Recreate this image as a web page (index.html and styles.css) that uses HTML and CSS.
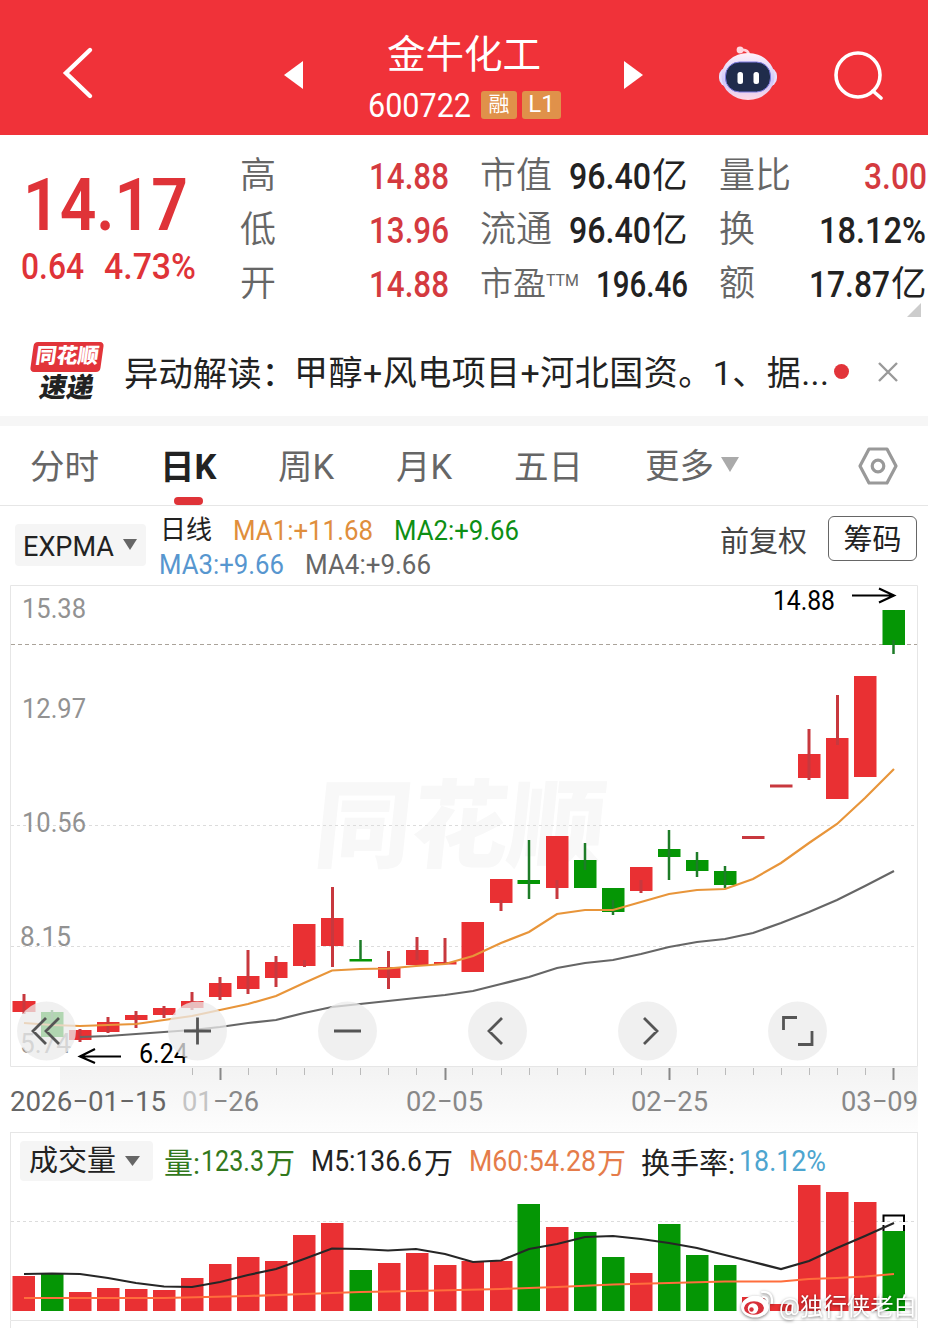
FILE: index.html
```html
<!DOCTYPE html>
<html lang="zh-CN">
<head>
<meta charset="utf-8">
<title>金牛化工 600722</title>
<link rel="stylesheet" href="styles.css">
</head>
<body>
<header class="top">
  <svg class="back" width="32" height="54" viewBox="0 0 32 54"><path d="M28 4L4 27L28 50" fill="none" stroke="#fff" stroke-width="4.4" stroke-linecap="round"/></svg>
  <svg class="prev" width="20" height="30"><path d="M0 15L19 1V29z" fill="#fff"/></svg>
  <div class="title">
    <h1>金牛化工</h1>
    <div class="code">
      <svg class="num" width="103" height="24"><text y="24" font-size="34" textLength="103" lengthAdjust="spacingAndGlyphs">600722</text></svg>
      <span class="badge">融</span><span class="badge b2">L1</span>
    </div>
  </div>
  <svg class="next" width="20" height="30"><path d="M20 15L1 1V29z" fill="#fff"/></svg>
  <svg class="robot" width="60" height="56" viewBox="0 0 60 56">
    <defs><linearGradient id="face" x1="0" y1="0" x2="0" y2="1"><stop offset="0" stop-color="#fff0f8"/><stop offset=".6" stop-color="#cfc8fa"/><stop offset="1" stop-color="#ffd9e6"/></linearGradient></defs>
    <circle cx="22" cy="5" r="3.4" fill="#ffd9e2"/><path d="M23 5Q30 4 31 10" fill="none" stroke="#ffd3dc" stroke-width="2.6"/>
    <rect x="1" y="22" width="58" height="20" rx="9" fill="#e7defb"/>
    <ellipse cx="30" cy="31.500" rx="26.500" ry="23.500" fill="url(#face)"/>
    <rect x="7.500" y="17" width="45" height="30" rx="14" fill="#202c4b" stroke="#7c7be0" stroke-width="1"/>
    <rect x="19.500" y="27" width="5.500" height="12" rx="2.500" fill="#fff"/><rect x="35.500" y="27" width="5.500" height="12" rx="2.500" fill="#fff"/>
  </svg>
  <svg class="search" width="50" height="50" viewBox="0 0 50 50"><g fill="none" stroke="#fff" stroke-width="3.600" stroke-linecap="round"><circle cx="24" cy="25" r="22"/><path d="M39 41L47 48"/></g></svg>
</header>

<section class="quote">
  <div class="price">
    <svg class="num bold" width="160" height="52"><text x="-5" y="52" font-size="73" textLength="165" lengthAdjust="spacingAndGlyphs">14.17</text></svg>
    <div class="delta">
      <svg class="num" width="63" height="26"><text x="-1" y="26" font-size="36.500" textLength="63" lengthAdjust="spacingAndGlyphs">0.64</text></svg>
      <svg class="num" width="92" height="26"><text x="-1" y="26" font-size="36.500" textLength="92" lengthAdjust="spacingAndGlyphs">4.73%</text></svg>
    </div>
  </div>
  <div class="stats">
    <div class="stat up"><label>高</label><svg class="num" width="80" height="26"><text y="26" font-size="37" textLength="80" lengthAdjust="spacingAndGlyphs">14.88</text></svg></div>
    <div class="stat"><label>市值</label><svg class="num" width="83" height="26"><text y="26" font-size="37" textLength="82" lengthAdjust="spacingAndGlyphs">96.40</text></svg><b>亿</b></div>
    <div class="stat up"><label>量比</label><svg class="num" width="63" height="26"><text y="26" font-size="37" textLength="63" lengthAdjust="spacingAndGlyphs">3.00</text></svg></div>
    <div class="stat up"><label>低</label><svg class="num" width="80" height="26"><text y="26" font-size="37" textLength="80" lengthAdjust="spacingAndGlyphs">13.96</text></svg></div>
    <div class="stat"><label>流通</label><svg class="num" width="83" height="26"><text y="26" font-size="37" textLength="82" lengthAdjust="spacingAndGlyphs">96.40</text></svg><b>亿</b></div>
    <div class="stat"><label>换</label><svg class="num" width="108" height="26"><text y="26" font-size="37" textLength="107" lengthAdjust="spacingAndGlyphs">18.12%</text></svg></div>
    <div class="stat up"><label>开</label><svg class="num" width="80" height="26"><text y="26" font-size="37" textLength="80" lengthAdjust="spacingAndGlyphs">14.88</text></svg></div>
    <div class="stat"><label class="pe">市盈<svg class="num" width="33" height="12"><text y="12" font-size="17" textLength="33" lengthAdjust="spacingAndGlyphs">TTM</text></svg></label><svg class="num" width="92" height="26"><text y="26" font-size="37" textLength="92" lengthAdjust="spacingAndGlyphs">196.46</text></svg></div>
    <div class="stat"><label>额</label><svg class="num" width="82" height="26"><text y="26" font-size="37" textLength="81" lengthAdjust="spacingAndGlyphs">17.87</text></svg><b>亿</b></div>
  </div>
  <svg class="corner" width="14" height="14"><path d="M14 0V14H0z" fill="#ccc"/></svg>
</section>

<section class="news">
  <div class="logo"><div class="l1"><span>同花顺</span></div><div class="l2">速递</div></div>
  <p><span>异动解读：</span><svg class="num" width="505" height="26"><text x="-2" y="26" font-size="34" textLength="535" lengthAdjust="spacing">甲醇+风电项目+河北国资。1、据...</text></svg></p>
  <i class="dot"></i>
  <svg class="close" width="22" height="22"><path d="M2 2L20 20M20 2L2 20" stroke="#999" stroke-width="2.400"/></svg>
</section>

<nav class="tabs">
  <span>分时</span><span class="on">日K</span><span>周K</span><span>月K</span><span>五日</span><span class="more">更多<svg width="18" height="16"><path d="M0 0H18L9 15z" fill="#aaa"/></svg></span>
  <svg class="gear" width="40" height="40" viewBox="0 0 40 40"><g fill="none" stroke="#999" stroke-width="3.200" stroke-linejoin="round"><path d="M11 3H29L38 20L29 37H11L2 20z"/><circle cx="20" cy="20" r="5.800"/></g></svg>
</nav>

<section class="indicator">
  <div class="chip"><svg class="num" width="91" height="20"><text x="-1" y="21" font-size="28" textLength="91" lengthAdjust="spacingAndGlyphs">EXPMA</text></svg><svg width="14" height="12"><path d="M0 0H14L7 11z" fill="#666"/></svg></div>
  <div class="lines">
    <div><em>日线</em>
      <svg class="num o" width="140" height="20"><text x="-1" y="19" font-size="27.500" textLength="140" lengthAdjust="spacingAndGlyphs">MA1:+11.68</text></svg>
      <svg class="num g" width="125" height="20"><text y="19" font-size="27.500" textLength="125" lengthAdjust="spacingAndGlyphs">MA2:+9.66</text></svg></div>
    <div><svg class="num b" width="125" height="20"><text x="-1" y="18" font-size="27.500" textLength="125" lengthAdjust="spacingAndGlyphs">MA3:+9.66</text></svg>
      <svg class="num k" width="125" height="20"><text y="18" font-size="27.500" textLength="126" lengthAdjust="spacingAndGlyphs">MA4:+9.66</text></svg></div>
  </div>
  <span class="adj">前复权</span>
  <span class="btn">筹码</span>
</section>

<svg class="chart" width="928" height="547" viewBox="0 585 928 547">
  <defs><linearGradient id="band" x1="0" y1="0" x2="0" y2="1"><stop offset="0" stop-color="#f3f3f3"/><stop offset="1" stop-color="#fdfdfd"/></linearGradient></defs>
  <rect x="60" y="1067" width="858" height="65" fill="url(#band)"/>
  <text class="mark" transform="translate(312 860) skewX(-6)" font-size="96" textLength="290" lengthAdjust="spacingAndGlyphs">同花顺</text>
  <path class="frame" d="M10.500 1066.500V585.500H917.500V1066.500z"/>
  <path class="grid" d="M11 825.500H917M11 946.500H917"/>
  <path d="M11 644.500H917" stroke="#aaa39a" stroke-width="1" stroke-dasharray="4 3"/>
  <g class="ylab">
    <text x="22" y="618" textLength="64" lengthAdjust="spacingAndGlyphs">15.38</text>
    <text x="22" y="718" textLength="64" lengthAdjust="spacingAndGlyphs">12.97</text>
    <text x="22" y="832" textLength="64" lengthAdjust="spacingAndGlyphs">10.56</text>
    <text x="20" y="946" textLength="51" lengthAdjust="spacingAndGlyphs">8.15</text>
    <text x="20" y="1053" textLength="51" lengthAdjust="spacingAndGlyphs">5.74</text>
  </g>
  <path class="red" d="M12.500 1001h23v11h-23zM69 1030h22.500v10h-22.500zM97 1022h22.500v10h-22.500zM125 1015h22.500v5h-22.500zM153 1008h22.500v7h-22.500zM181 1001h22.500v7h-22.500zM209 983h22.500v14h-22.500zM237 976h22.500v13h-22.500zM265 962h22.500v16h-22.500zM293 924h22.500v42h-22.500zM321 918h22.500v28h-22.500zM378 967h22.500v11h-22.500zM406 950h22.500v15h-22.500zM434 962h22.500v2.500h-22.500zM461.500 922h22.500v50h-22.500zM490 879h22.500v24h-22.500zM546 836h22.500v52h-22.500zM630 867h22.500v24h-22.500zM798 754h22.500v24h-22.500zM826 738h22.500v61h-22.500zM854 676h22.500v101h-22.500z"/>
  <path class="rw" d="M24 994V1014M80 1029V1042M108 1017V1033M136 1011V1028M164 1006V1018M192 992V1010M220 977V1000M248 950V994M276 956V987M304.500 960V967M332.500 887V967M388.500 951V989M417 937V960M445 938V963M501 900V911M557 880V899M641 880V893M809 729V780M837.500 695V745M742 837.500H764.500M770 786H792.500"/>
  <path class="green" d="M41 1012h22.500v25h-22.500zM349.500 959h22.500v2.500h-22.500zM517.500 880h22.500v4h-22.500zM574 860h22.500v28h-22.500zM602 888h22.500v24h-22.500zM658 849h22.500v8h-22.500zM686 860h22.500v11h-22.500zM714 871h22.500v14h-22.500zM882.500 610h22.500v35h-22.500z"/>
  <path class="gw" d="M52 1010V1020M360.500 940V960M529 840V899M585 843V870M613 900V915M669 830V880M697 852V877M725 866V888M893.500 640V654"/>
  <polyline class="ma" stroke="#e8953a" points="24,1023 52,1025 80,1026 108,1025 136,1024 164,1020 192,1016 220,1010 248,1004 276,996 304,983 332,970.5 360,969 388,968.5 416,966 445,964 473,956 501,943 529,932 557,914 585,910 613,910 641,902 669,894 697,890 725,889 753,879 781,863 809,843 837,824 865,798 894,769"/>
  <polyline class="ma" stroke="#666" points="80,1037 108,1036 136,1034 164,1032 192,1030 220,1027 248,1023 276,1020 304,1013 332,1007 360,1004 388,1001 416,998 445,995 473,991 501,984 529,977 557,968 585,963 613,960 641,954 669,947 697,942 725,939 753,933 781,923 809,912 837,900 865,886 894,871"/>
  <g class="tip">
    <text x="773" y="610" textLength="62" lengthAdjust="spacingAndGlyphs">14.88</text>
    <path d="M852 595.500H893M879 588.500L894 595.500L879 602.500"/>
    <text x="139" y="1063" textLength="49" lengthAdjust="spacingAndGlyphs">6.24</text>
    <path d="M121 1056.500H81M95 1049L80 1056.500L95 1063"/>
  </g>
  <g fill="#ebebeb" fill-opacity=".75"><circle cx="46.500" cy="1031" r="29.500"/><circle cx="197.500" cy="1031" r="29.500"/><circle cx="347.500" cy="1031" r="29.500"/><circle cx="497.500" cy="1031" r="29.500"/><circle cx="647.500" cy="1031" r="29.500"/><circle cx="797.500" cy="1031" r="29.500"/></g>
  <path class="ctl" d="M46 1018L33 1031L46 1044M59 1018L46 1031L59 1044M184 1031H211M197.500 1017.500V1044.500M334 1031H361M502 1018L489 1031L502 1044M644 1018L657 1031L644 1044M783.500 1030V1017.500H797M798 1044.500H812V1031"/>
  <path d="M192.500 1068v7M248.500 1068v7M276.500 1068v7M304.500 1068v7M332.500 1068v7M360.500 1068v7M388.500 1068v7M416.500 1068v7M472.500 1068v7M501.500 1068v7M529.500 1068v7M557.500 1068v7M585.500 1068v7M613.500 1068v7M641.500 1068v7M697.500 1068v7M725.500 1068v7M753.500 1068v7M781.500 1068v7M809.500 1068v7M837.500 1068v7M865.500 1068v7" stroke="#bbb"/>
  <path d="M220.500 1068v12M445.500 1068v12M669.500 1068v12M893.500 1068v12" stroke="#888" stroke-width="2"/>
  <g class="xlab">
    <text x="10" y="1111" fill="#666" textLength="156" lengthAdjust="spacingAndGlyphs">2026−01−15</text>
    <text x="182" y="1111" textLength="77" lengthAdjust="spacingAndGlyphs"><tspan fill="#c4c4c4">01</tspan>−26</text>
    <text x="406" y="1111" textLength="77" lengthAdjust="spacingAndGlyphs">02−05</text>
    <text x="631" y="1111" textLength="77" lengthAdjust="spacingAndGlyphs">02−25</text>
    <text x="841" y="1111" textLength="77" lengthAdjust="spacingAndGlyphs">03−09</text>
  </g>
</svg>

<section class="volume">
  <div class="vhead">
    <div class="chip2">成交量<svg width="15" height="11"><path d="M0 0H15L7.500 10z" fill="#666"/></svg></div>
    <span class="v1">量:<svg class="num" width="66" height="21"><text x="1" y="20" font-size="29.500" textLength="63" lengthAdjust="spacingAndGlyphs">123.3</text></svg>万</span>
    <span class="v2"><svg class="num" width="113" height="21"><text y="20" font-size="29.500" textLength="111" lengthAdjust="spacingAndGlyphs">M5:136.6</text></svg>万</span>
    <span class="v3"><svg class="num" width="127" height="21"><text x="-1" y="20" font-size="29.500" textLength="127" lengthAdjust="spacingAndGlyphs">M60:54.28</text></svg>万</span>
    <span class="v4">换手率:</span><svg class="num v5" width="87" height="21"><text y="20" font-size="29.500" textLength="87" lengthAdjust="spacingAndGlyphs">18.12%</text></svg>
  </div>
  <svg class="vchart" width="928" height="146" viewBox="0 1182 928 146">
    <path class="grid" d="M11 1221.500H917"/>
    <path class="red" d="M12.500 1276h22.500v35h-22.500zM69 1292h22.500v19h-22.500zM97 1288h22.500v23h-22.500zM125 1289h22.500v22h-22.500zM153 1290h22.500v21h-22.500zM181 1278h22.500v33h-22.500zM209 1264h22.500v47h-22.500zM237 1257h22.500v54h-22.500zM265 1261h22.500v50h-22.500zM293 1235h22.500v76h-22.500zM321 1223h22.500v88h-22.500zM378 1263h22.500v48h-22.500zM406 1253h22.500v58h-22.500zM434 1265h22.500v46h-22.500zM461.500 1261h22.500v50h-22.500zM490 1261h22.500v50h-22.500zM546 1227h22.500v84h-22.500zM630 1273h22.500v38h-22.500zM742 1297h22.500v14h-22.500zM770 1304h22.500v7h-22.500zM798 1185h22.500v126h-22.500zM826 1192h22.500v119h-22.500zM854 1202h22.500v109h-22.500z"/>
    <path class="green" d="M41 1273h22.500v38h-22.500zM349.500 1270h22.500v41h-22.500zM517.500 1204h22.500v107h-22.500zM574 1232h22.500v79h-22.500zM602 1257h22.500v54h-22.500zM658 1224h22.500v87h-22.500zM686 1255h22.500v56h-22.500zM714 1265h22.500v46h-22.500zM882.500 1231h22.500v80h-22.500z"/>
    <path d="M883.500 1222V1215.500H904V1222M883.500 1225V1231M904 1225V1231" fill="none" stroke="#000" stroke-width="2"/>
    <polyline class="ma" stroke="#262626" points="24,1274 52,1273.5 80,1274 108,1278 136,1283 164,1286.5 192,1287 220,1282 248,1275 276,1269 304,1259 332,1248.500 360,1249 388,1250.500 416,1249 445,1254 473,1262 501,1260.500 529,1249 557,1244 585,1237 613,1236 641,1239 669,1243 697,1248 725,1255 753,1262 781,1269 809,1261 837,1248 865,1236 894,1223"/>
    <polyline class="ma" stroke="#ff6e3c" points="24,1298 164,1298 248,1296 304,1294 360,1292 416,1291 501,1289 557,1287 613,1284.500 669,1283 725,1281.500 781,1281.500 809,1279 837,1278 865,1276.500 894,1274"/>
    <path class="frame" d="M10.500 1328V1320.500H917.500V1328"/>
    <g class="weibo">
      <ellipse cx="755" cy="1307" rx="14" ry="10.500" fill="#fff"/><path d="M742 1304Q748 1294 757 1296Q763 1295 765 1302L757 1303z" fill="#fff"/>
      <ellipse cx="754" cy="1308" rx="10" ry="6.800" fill="#d8303a"/><circle cx="753" cy="1308.500" r="5.200" fill="#fff"/><circle cx="751.500" cy="1309.500" r="2.200" fill="#d8303a"/>
      <path d="M762 1292Q773 1291 772 1303M763 1297Q768 1297 767.500 1302" fill="none" stroke="#fff" stroke-width="2.200" stroke-linecap="round"/>
      <text x="779" y="1315" font-size="24" textLength="138" lengthAdjust="spacingAndGlyphs">@独行侠老白</text>
    </g>
  </svg>
</section>
</body>
</html>
```
FILE: styles.css
```css
* { box-sizing: border-box; }
body {
  margin: 0;
  width: 928px;
  height: 1328px;
  overflow: hidden;
  background: #fff;
  color: #222;
  font-family: Roboto, "Noto Sans CJK SC", sans-serif;
}
svg { flex: none; display: block; }
.num { overflow: visible; fill: currentColor; font-weight: 500; }
.num.bold { font-weight: 600; }

.top { display: flex; height: 135px; background: #f03239; color: #fff; align-items: flex-start; }
.back { margin: 46px 0 0 62px; }
.prev { margin: 60px 0 0 190px; }
.title { width: 214px; margin-left: 61px; padding-top: 32px; }
.title h1 { margin: 0 0 0 22px; font-size: 38.500px; line-height: 46px; font-weight: 400; white-space: nowrap; }
.code { display: flex; align-items: center; height: 30px; margin-top: 12px; margin-left: 3px; }
.code .num { font-weight: 400; }
.badge { width: 36px; height: 28px; margin-left: 10px; border-radius: 3px; background: #e0914a; font-size: 21px; line-height: 27px; text-align: center; }
.b2 { width: 39px; margin-left: 5px; font-size: 24px; }
.next { margin: 60px 0 0 44px; }
.robot { margin: 45px 0 0 75px; }
.search { margin: 50px 0 0 56px; }

.quote { position: relative; display: flex; height: 190px; }
.price { width: 240px; padding: 43px 0 0 28px; color: #df3338; }
.delta { display: flex; gap: 20px; margin: 23px 0 0 -6px; }
.stats { display: grid; grid-template-columns: 209px 208px 208px; grid-auto-rows: 54px; column-gap: 31px; padding-top: 14px; }
.stat { display: flex; align-items: center; }
.stat label { flex: 1; font-size: 36px; line-height: 54px; color: #666; font-weight: 350; white-space: nowrap; }
.stat.up .num { color: #d43a3f; }
.stat b { width: 36px; font-size: 35.500px; line-height: 54px; font-weight: 400; }
.stat .pe { display: flex; align-items: flex-start; font-size: 33px; }
.pe .num { margin-top: 17px; font-weight: 400; }
.corner { position: absolute; left: 907px; top: 168px; }

.news { display: flex; align-items: center; height: 101px; border-bottom: 10px solid #f6f6f6; }
.logo { width: 74px; margin-left: 30px; margin-top: 2px; font-weight: 900; }
.l1 { width: 70px; height: 30px; margin-left: 2px; background: #e2343a; border-radius: 4px; transform: skewX(-8deg); color: #fff; font-size: 21px; line-height: 29px; text-align: center; }
.l2 { height: 29px; font-size: 27px; line-height: 33px; text-align: center; transform: skewX(-10deg); }
.news p { display: flex; align-items: center; width: 704px; margin: 0 0 0 20px; font-size: 34.400px; white-space: nowrap; }
.news p .num { font-weight: 400; margin-top: 3px; }
.dot { width: 15px; height: 15px; margin: 2px 0 0 6px; border-radius: 50%; background: #e2343a; }
.close { margin: 2px 0 0 28px; }

.tabs { display: flex; height: 80px; border-bottom: 1px solid #e6e6e6; font-size: 34.500px; line-height: 82px; color: #666; white-space: nowrap; }
.tabs span { width: 118px; }
.tabs span:first-child { width: 130px; margin-left: 30px; }
.tabs .on { position: relative; color: #222; font-weight: 700; }
.tabs .on::after { content: ""; position: absolute; left: 14px; top: 71px; width: 29px; height: 8px; border-radius: 4px; background: #df3338; }
.tabs span:nth-child(5) { width: 131px; }
.tabs .more { display: flex; align-items: center; gap: 7px; width: 213px; }
.more svg { margin-top: -2px; }
.gear { margin-top: 20px; }

.indicator { display: flex; height: 79px; }
.chip { display: flex; align-items: center; gap: 8px; width: 131px; height: 42px; margin: 18px 0 0 15px; padding-left: 9px; border-radius: 4px; background: #f5f5f5; }
.chip .num { font-weight: 400; }
.lines { width: 560px; margin: 7px 0 0 14px; }
.lines div { display: flex; align-items: center; height: 35px; }
.lines em { width: 74px; font-style: normal; font-size: 26px; line-height: 35px; }
.lines .num + .num { margin-left: 20px; }
.lines .num { font-weight: 400; }
.o { color: #e08e3c; } .g { color: #0e8f14; } .b { color: #5796cf; } .k { color: #666; }
.adj { width: 108px; font-size: 29px; line-height: 73px; color: #444; white-space: nowrap; }
.btn { width: 89px; height: 45px; margin-top: 10px; border: 1.500px solid #666; border-radius: 6px; font-size: 29px; line-height: 47px; text-align: center; }

.chart text, .vchart text { font-family: Roboto, "Noto Sans CJK SC", sans-serif; }
.chart .mark { fill: #f8f8f8; font-weight: 900; }
.frame { fill: none; stroke: #e6e6e6; }
.grid { stroke: #dcdcdc; stroke-dasharray: 3 3; }
.ylab { fill: #929292; font-size: 28px; }
.red { fill: #e93033; }
.green { fill: #059605; }
.rw { stroke: #c8383e; stroke-width: 3; }
.gw { stroke: #1e7c28; stroke-width: 2.500; }
.ma { fill: none; stroke-width: 2.200; }
.tip { fill: #000; font-size: 27px; }
.tip path { fill: none; stroke: #000; stroke-width: 2.200; }
.ctl { fill: none; stroke: #555; stroke-width: 2.800; }
.xlab { fill: #888; font-size: 28px; }

.volume { height: 196px; }
.vhead { display: flex; align-items: center; height: 50px; margin: 0 10px; padding-top: 7px; border: 1px solid #e6e6e6; border-bottom: 0; font-size: 29px; white-space: nowrap; }
.vhead .num { font-weight: 450; }
.vhead span { display: flex; align-items: center; height: 40px; }
.chip2 { display: flex; align-items: center; gap: 9px; width: 133px; height: 40px; margin-left: 9px; padding-left: 9px; border-radius: 4px; background: #f5f5f5; line-height: 42px; }
.v1 { width: 147px; margin-left: 11px; color: #32781c; }
.v2 { width: 159px; }
.v3 { width: 171px; color: #e57c4a; }
.v4 { width: 98px; }
.v5 { color: #4da5cf; }
.vchart { background: linear-gradient(#e6e6e6, #e6e6e6) 10px 0 / 1px 138px no-repeat, linear-gradient(#e6e6e6, #e6e6e6) 917px 0 / 1px 138px no-repeat; }
.weibo { filter: drop-shadow(0 1px 1.500px rgba(0, 0, 0, .5)); fill: #fff; }
```
